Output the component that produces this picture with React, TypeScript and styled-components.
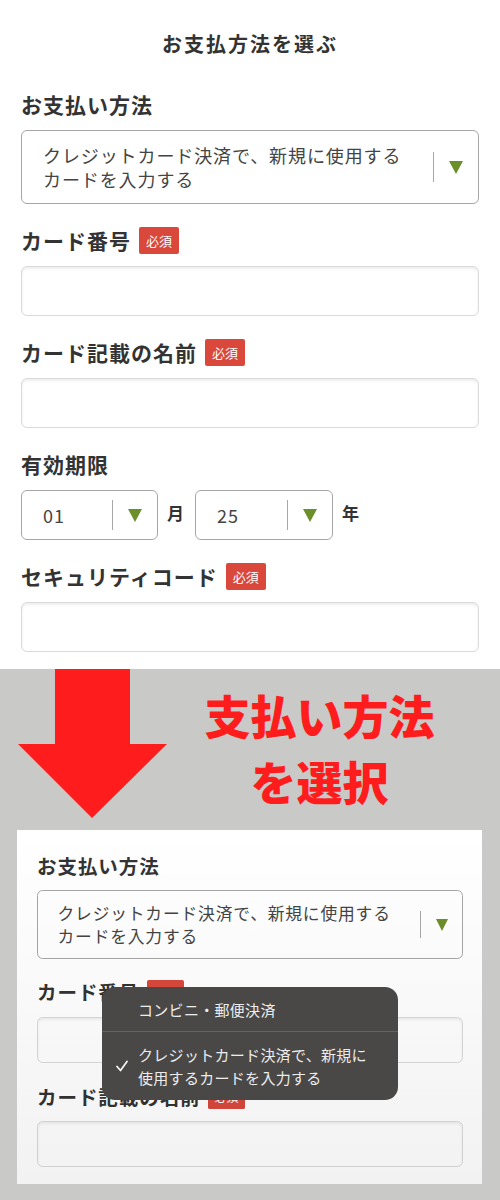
import React from "react";
import styled, { createGlobalStyle } from "styled-components";

const GlobalStyle = createGlobalStyle`
  body {
    margin: 0;
    background: #fff;
    font-family: "Noto Sans CJK JP", "Noto Sans", sans-serif;
    color: #333;
  }
  * { box-sizing: border-box; }
`;

const Page = styled.div`
  width: 500px;
`;

const TopSection = styled.section`
  padding: 30px 21px 17px;
`;

const Title = styled.h1`
  margin: 0 0 31px;
  text-align: center;
  font-size: 20px;
  font-weight: 700;
  letter-spacing: 2px;
  line-height: 28px;
  color: #333;
`;

const Form = styled.div`
  display: flex;
  flex-direction: column;
  gap: 21px;
`;

const Field = styled.div`
  display: flex;
  flex-direction: column;
  gap: 11px;
`;

const LabelRow = styled.div`
  display: flex;
  align-items: center;
  gap: 8px;
  height: 30px;
`;

const Label = styled.span`
  font-size: 21px;
  font-weight: 700;
  letter-spacing: 1px;
  line-height: 30px;
  color: #333;
`;

const Badge = styled.span`
  background: #d9483b;
  color: #fff;
  font-size: 13px;
  line-height: 27px;
  height: 27px;
  padding: 0 7px;
  border-radius: 2px;
  letter-spacing: 0;
`;

const TextInput = styled.input`
  display: block;
  width: 100%;
  height: 50px;
  border: 1px solid #dadada;
  border-radius: 6px;
  background: #fff;
  box-shadow: inset 0 2px 3px rgba(0, 0, 0, 0.07);
  outline: none;
  font: inherit;
`;

const SelectBox = styled.div<{ $width?: number; $height: number }>`
  display: flex;
  align-items: center;
  width: ${(p) => (p.$width ? `${p.$width}px` : "100%")};
  height: ${(p) => p.$height}px;
  border: 1px solid #a6a6a6;
  border-radius: 6px;
  background: #fff;
`;

const SelectValue = styled.div`
  flex: 1;
  padding: 0 20px 0 21px;
  font-size: 18px;
  line-height: 24px;
  letter-spacing: 0.9px;
  color: #444;
`;

const Divider = styled.span`
  width: 1px;
  height: 30px;
  background: #a8a8a8;
`;

const ArrowArea = styled.span`
  width: 44px;
  display: flex;
  justify-content: center;
  align-items: center;
`;

const Triangle = styled.span`
  width: 0;
  height: 0;
  border-left: 7px solid transparent;
  border-right: 7px solid transparent;
  border-top: 13px solid #6b8f2a;
`;

const DateRow = styled.div`
  display: flex;
  align-items: center;
  gap: 9px;
`;

const DateUnit = styled.span`
  font-size: 17px;
  font-weight: 700;
  color: #333;
  margin-right: 2px;
  margin-top: -6px;
`;

const GraySection = styled.section`
  background: #c9c9c7;
  padding: 0 18px 17px 17px;
`;

const Header = styled.div`
  display: flex;
  height: 161px;
`;

const ArrowSvg = styled.svg`
  flex: none;
  margin-left: 1px;
`;

const Caption = styled.div`
  flex: 1;
  text-align: center;
  color: #ff1c1c;
  font-size: 46px;
  font-weight: 900;
  line-height: 66px;
  padding: 12px 11px 0 0;
`;

const Card = styled.div`
  position: relative;
  background: #fff;
  padding: 22px 19px 17px 20px;
  &::after {
    content: "";
    position: absolute;
    inset: 0;
    background: linear-gradient(rgba(0, 0, 0, 0), rgba(0, 0, 0, 0.05));
    pointer-events: none;
    z-index: 1;
  }
`;

const Scaled = styled.div`
  zoom: 0.93;
`;

const Menu = styled.div`
  position: absolute;
  left: 85px;
  top: 157px;
  width: 296px;
  background: #4a4847;
  border-radius: 13px;
  color: #ececec;
  font-size: 15px;
  letter-spacing: 0.3px;
  line-height: 23px;
  z-index: 2;
  overflow: hidden;
`;

const MenuItem = styled.div<{ $first?: boolean }>`
  display: flex;
  align-items: center;
  padding: ${(p) => (p.$first ? "11px 24px 10px 0" : "11px 24px 11px 0")};
  border-top: ${(p) => (p.$first ? "none" : "1px solid #66635f")};
`;

const CheckCol = styled.span`
  width: 36px;
  flex: none;
  display: flex;
  justify-content: center;
  padding-left: 3px;
`;

const MenuText = styled.span`
  flex: 1;
`;

const PAYMENT = "クレジットカード決済で、新規に使用するカードを入力する";

function Select({ value, width, height }: { value: string; width?: number; height: number }) {
  return (
    <SelectBox $width={width} $height={height}>
      <SelectValue>{value}</SelectValue>
      <Divider />
      <ArrowArea>
        <Triangle />
      </ArrowArea>
    </SelectBox>
  );
}

function LabelLine({ text, required }: { text: string; required?: boolean }) {
  return (
    <LabelRow>
      <Label>{text}</Label>
      {required && <Badge>必須</Badge>}
    </LabelRow>
  );
}

function PaymentFields({ full }: { full: boolean }) {
  return (
    <Form>
      <Field>
        <LabelLine text="お支払い方法" />
        <Select value={PAYMENT} height={74} />
      </Field>
      <Field>
        <LabelLine text="カード番号" required />
        <TextInput readOnly />
      </Field>
      <Field>
        <LabelLine text="カード記載の名前" required />
        <TextInput readOnly />
      </Field>
      {full && (
        <>
          <Field>
            <LabelLine text="有効期限" />
            <DateRow>
              <Select value="01" width={137} height={50} />
              <DateUnit>月</DateUnit>
              <Select value="25" width={138} height={50} />
              <DateUnit>年</DateUnit>
            </DateRow>
          </Field>
          <Field>
            <LabelLine text="セキュリティコード" required />
            <TextInput readOnly />
          </Field>
        </>
      )}
    </Form>
  );
}

export default function App() {
  return (
    <Page>
      <GlobalStyle />
      <TopSection>
        <Title>お支払方法を選ぶ</Title>
        <PaymentFields full />
      </TopSection>
      <GraySection>
        <Header>
          <ArrowSvg width="150" height="150" viewBox="0 0 150 150">
            <polygon points="37,0 112,0 112,75 149,75 74,149 0,75 37,75" fill="#ff1c1c" />
          </ArrowSvg>
          <Caption>
            支払い方法
            <br />
            を選択
          </Caption>
        </Header>
        <Card>
          <Scaled>
            <PaymentFields full={false} />
          </Scaled>
          <Menu>
            <MenuItem $first>
              <CheckCol />
              <MenuText>コンビニ・郵便決済</MenuText>
            </MenuItem>
            <MenuItem>
              <CheckCol>
                <svg width="12" height="12" viewBox="0 0 12 12">
                  <polyline points="1,6.5 4.5,10.5 11,1.5" fill="none" stroke="#f2f2f2" strokeWidth="1.8" strokeLinecap="round" strokeLinejoin="round" />
                </svg>
              </CheckCol>
              <MenuText>{PAYMENT}</MenuText>
            </MenuItem>
          </Menu>
        </Card>
      </GraySection>
    </Page>
  );
}
